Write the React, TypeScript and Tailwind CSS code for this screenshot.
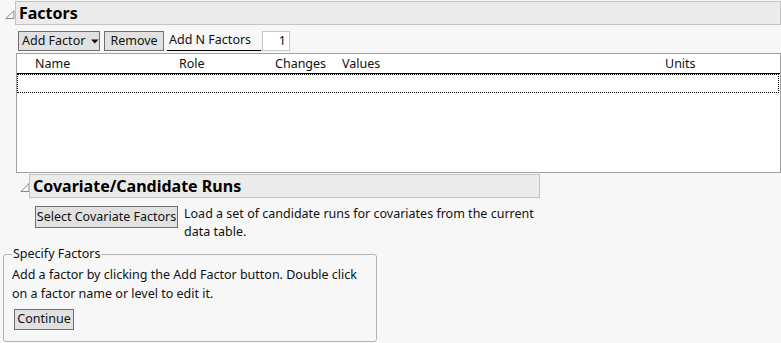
import React from "react";

function Tri({ className = "" }: { className?: string }) {
  return (
    <svg width="10" height="9" viewBox="0 0 10 9" className={className}>
      <path d="M9 0.5 L9 8.5 L0.8 8.5 Z" fill="none" stroke="#8a8a8a" strokeWidth="1" />
    </svg>
  );
}

function Btn({ children, className = "" }: { children: React.ReactNode; className?: string }) {
  return (
    <div
      className={
        "flex shrink-0 items-center whitespace-nowrap border border-[#707070] bg-[#e1e1e1] text-[12.5px] leading-none text-[#111] " +
        className
      }
    >
      {children}
    </div>
  );
}

export default function App() {
  return (
    <div
      className="relative w-[781px] h-[343px] overflow-hidden bg-[#f7f7f7] text-[#111]"
      style={{ fontFamily: '"Noto Sans", "Open Sans", sans-serif' }}
    >
      {/* Factors outline */}
      <div className="flex items-end pt-[1px]">
        <Tri className="ml-[5px] mb-[6px]" />
        <div className="ml-[0px] flex h-[24px] w-[766px] items-center border border-[#c3c3c3] bg-[#ebebeb] pl-[3px] text-[16px] font-bold leading-none text-black">
          Factors
        </div>
      </div>

      <div className="ml-[16px]">
        {/* toolbar */}
        <div className="mt-[6px] flex h-[20px] items-stretch">
          <Btn className="ml-[2px] w-[82px] pl-[3px]">
            <span>Add Factor</span>
            <svg width="9" height="5" viewBox="0 0 9 5" className="ml-[6px]">
              <path d="M0 0 H9 L4.5 5 Z" fill="#111" />
            </svg>
          </Btn>
          <Btn className="ml-[4px] w-[60px] justify-center">Remove</Btn>
          <div className="ml-[3px] flex w-[94px] items-center whitespace-nowrap border-b border-black pl-[2px] text-[12.5px] leading-none">
            Add N Factors
          </div>
          <div className="ml-[1px] flex w-[28px] items-center justify-end border border-[#c6c6c6] bg-white pr-[3px] text-[12.5px] leading-none">
            1
          </div>
        </div>

        {/* table */}
        <div className="mt-[2px] h-[120px] w-[765px] border border-[#a0a0a0] bg-white">
          <div className="relative h-[20px] border-b border-black text-[12.5px] leading-none">
            <span className="absolute left-[18px] top-[4px]">Name</span>
            <span className="absolute left-[162px] top-[4px]">Role</span>
            <span className="absolute left-[258px] top-[4px]">Changes</span>
            <span className="absolute left-[325px] top-[4px]">Values</span>
            <span className="absolute left-[648px] top-[4px]">Units</span>
          </div>
          <div className="h-[19px] w-[762px] border border-dotted border-black" />
        </div>
      </div>

      {/* Covariate outline */}
      <div className="mt-[1px] flex items-end pl-[20px]">
        <Tri className="mb-[6px]" />
        <div className="-ml-[1px] flex h-[24px] w-[511px] items-center border border-[#c3c3c3] bg-[#ebebeb] pl-[3px] text-[16px] font-bold leading-none text-black">
          Covariate/Candidate Runs
        </div>
      </div>

      <div className="mt-[8px] flex items-start pl-[35px]">
        <Btn className="h-[22px] w-[143px] justify-center">Select Covariate Factors</Btn>
        <p className="ml-[6px] mt-[-1px] w-[360px] text-[12.5px] leading-[18px]">
          Load a set of candidate runs for covariates from the current data table.
        </p>
      </div>

      {/* Specify Factors */}
      <fieldset className="ml-[3px] mt-[5px] h-[96px] w-[374px] min-w-0 rounded-[3px] border border-[#b4b4b4] px-[8px] pb-[0px]">
        <legend className="ml-[0px] px-[1px] text-[12.5px] leading-[16px]">Specify Factors</legend>
        <p className="mt-[3px] text-[12.5px] leading-[19px]">
          Add a factor by clicking the Add Factor button. Double click on a factor name or level to edit it.
        </p>
        <Btn className="ml-[2px] mt-[6px] h-[21px] w-[60px] justify-center">Continue</Btn>
      </fieldset>
    </div>
  );
}
